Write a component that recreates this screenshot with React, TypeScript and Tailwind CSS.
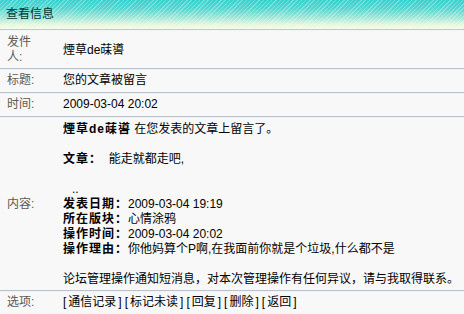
import React from 'react';

const font = "font-['Liberation_Sans','Noto_Sans_CJK_SC',sans-serif]";

const Row = ({ label, children, pad = 'pt-[3px] pb-[4px]' }: { label: string; children: React.ReactNode; pad?: string }) => (
    <div className={`flex items-center border-t border-t-[#eef4fa] border-b border-b-[#b7c2cd] bg-[#f8f8f8] ${pad}`}>
        <div className="w-[57px] shrink-0 pl-[7px] pr-[20px] text-[#5a5a50]">{label}</div>
        <div className="flex-1 pl-[6px]">{children}</div>
    </div>
);

const B = ({ children }: { children: React.ReactNode }) => <b className="tracking-[1px]">{children}</b>;

const links = ['通信记录', '标记未读', '回复', '删除', '返回'];

export default function App() {
    return (
        <div className={`h-[314px] w-[464px] overflow-hidden bg-[#f8f8f8] text-[12px] leading-[15px] text-black ${font}`}>
            <div className="relative border-b border-[#c6cac4] bg-[linear-gradient(180deg,#34d2cf_0%,#55d7d0_30%,#9ee6d8_60%,#e6f7de_85%,#f4fae6_100%)] pl-[6px] pt-[7px] pb-[7px] text-[#0b3434]">
                <div className="absolute inset-0 bg-[repeating-linear-gradient(135deg,rgba(255,255,255,0.28)_0px,rgba(255,255,255,0.28)_1px,transparent_1px,transparent_3px)]" />
                <span className="relative">查看信息</span>
            </div>

            <Row label="发件人:" pad="pt-[4px] pb-[3px]">煙草de菋噵</Row>
            <Row label="标题:">您的文章被留言</Row>
            <Row label="时间:">2009-03-04 20:02</Row>
            <Row label="内容:" pad="pt-[4px] pb-[3px]">
                <div><B>煙草de菋噵</B> 在您发表的文章上留言了。</div>
                <div>&nbsp;</div>
                <div><B>文章：</B>&nbsp;&nbsp;能走就都走吧,</div>
                <div>&nbsp;</div>
                <div className="pl-[9px]">..</div>
                <div><B>发表日期：</B>2009-03-04 19:19</div>
                <div><B>所在版块：</B>心情涂鸦</div>
                <div><B>操作时间：</B>2009-03-04 20:02</div>
                <div><B>操作理由：</B>你他妈算个P啊,在我面前你就是个垃圾,什么都不是</div>
                <div>&nbsp;</div>
                <div>论坛管理操作通知短消息，对本次管理操作有任何异议，请与我取得联系。</div>
            </Row>
            <div className="flex items-center border-t border-t-[#eef4fa] bg-[#f8f8f8] pt-[3px] pb-[4px]">
                <div className="w-[57px] shrink-0 pl-[7px] pr-[20px] text-[#5a5a50]">选项:</div>
                <div className="flex flex-1 gap-[3px] pl-[6px]">
                    {links.map((l) => (
                        <span key={l} className="cursor-pointer">
                            [<span className="px-[2px]">{l}</span>]
                        </span>
                    ))}
                </div>
            </div>
        </div>
    );
}
